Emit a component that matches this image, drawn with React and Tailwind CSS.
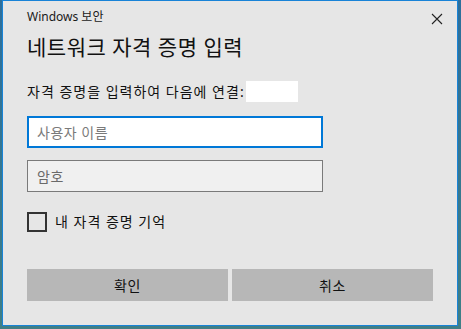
export default function App() {
  const font = { fontFamily: '"Noto Sans", "Noto Sans CJK KR", sans-serif' };
  return (
    <div className="w-[461px] h-[329px] overflow-hidden bg-gradient-to-b from-[#2d6f9c] to-[#3f7f86] pl-[2px]" style={font}>
      <div className="flex h-[326px] w-[456px] flex-col border border-[#1883d7] bg-[#e6e6e6] text-black">
        <div className="flex h-[32px] items-start justify-between pl-[24px] pr-[14px] pt-[8px]">
          <span className="text-[12px] leading-[16px] text-[#1a1a1a]">Windows 보안</span>
          <svg width="12" height="12" viewBox="0 0 12 12" className="mt-[4px]">
            <path d="M1 1 L11 11 M11 1 L1 11" stroke="#222" strokeWidth="1.1" fill="none" />
          </svg>
        </div>
        <div className="pl-[24px] text-[21px] leading-[28px] tracking-[0.5px] text-[#111]">네트워크 자격 증명 입력</div>
        <div className="mt-[20px] flex items-center pl-[24px]">
          <span className="text-[14px] leading-[20px] tracking-[1px] text-[#111]">자격 증명을 입력하여 다음에 연결:</span>
          <span className="ml-[1px] h-[21px] w-[52px] bg-white" />
        </div>
        <div className="mt-[14px] ml-[24px] flex h-[32px] w-[296px] items-center border-2 border-[#0078d7] bg-white pl-[8px] text-[14px] tracking-[0.5px] text-[#7a7a7a]">
          사용자 이름
        </div>
        <div className="mt-[12px] ml-[24px] flex h-[32px] w-[296px] items-center border border-[#7a7a7a] bg-[#f0f0f0] pl-[9px] text-[14px] tracking-[0.5px] text-[#6a6a6a]">
          암호
        </div>
        <div className="mt-[19px] ml-[24px] flex items-center">
          <span className="h-[20px] w-[20px] border-2 border-[#333]" />
          <span className="ml-[8px] text-[14px] tracking-[1px] text-[#111]">내 자격 증명 기억</span>
        </div>
        <div className="mt-[37px] ml-[24px] flex gap-[4px]">
          <div className="flex h-[32px] w-[201px] items-center justify-center bg-[#b7b7b7] text-[14px] tracking-[0.5px] text-[#111]">확인</div>
          <div className="flex h-[32px] w-[201px] items-center justify-center bg-[#b7b7b7] text-[14px] tracking-[0.5px] text-[#111]">취소</div>
        </div>
      </div>
    </div>
  );
}
